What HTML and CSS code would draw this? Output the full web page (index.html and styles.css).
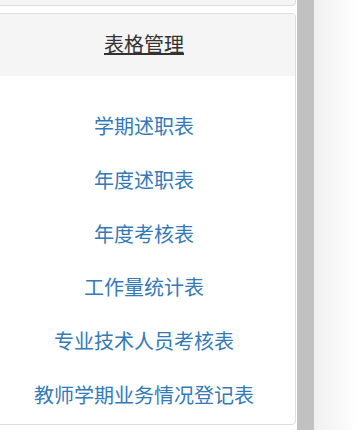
FILE: index.html
```html
<!DOCTYPE html>
<html lang="zh-CN">
<head>
  <meta charset="UTF-8">
  <title>表格管理</title>
  <link rel="stylesheet" href="styles.css">
</head>
<body>

  <div class="page">
    <div class="sidebar">
      <!-- end of the panel above -->
      <div class="panel panel-prev"></div>

      <div class="panel">
        <div class="panel-heading">
          <a href="#" class="panel-title">表格管理</a>
        </div>
        <ul class="form-list">
          <li><a href="#">学期述职表</a></li>
          <li><a href="#">年度述职表</a></li>
          <li><a href="#">年度考核表</a></li>
          <li><a href="#">工作量统计表</a></li>
          <li><a href="#">专业技术人员考核表</a></li>
          <li><a href="#">教师学期业务情况登记表</a></li>
        </ul>
      </div>
    </div>

    <div class="scroll-bar"></div>
    <div class="content"></div>
  </div>

</body>
</html>
```

FILE: styles.css
```css
html, body {
  margin: 0;
  padding: 0;
  height: 100%;
  background: #fff;
  font-family: "Liberation Sans", "Noto Sans CJK SC", sans-serif;
}

.page {
  display: flex;
  height: 430px;
  overflow: hidden;
}

.sidebar {
  width: 297px;
  flex-shrink: 0;
  overflow: hidden;
}

.panel {
  margin-left: -8px;
  width: 302px;
  border: 1px solid #ddd;
  border-radius: 4px;
  background: #fff;
  box-sizing: content-box;
}

.panel-prev {
  height: 5px;
  margin-bottom: 7px;
  border-top: none;
  border-radius: 0 0 4px 4px;
  background: #f5f5f5;
}

.panel-heading {
  background: #f5f5f5;
  padding: 17px 0 16px;
  text-align: center;
  font-size: 20px;
  line-height: 29px;
  border-radius: 4px 4px 0 0;
}

.panel-title {
  color: #333;
  text-decoration: underline;
}

.form-list {
  list-style: none;
  margin: 0;
  padding: 25px 0 0;
}

.form-list li {
  text-align: center;
  padding: 13px 0;
  font-size: 20px;
  line-height: 27.8px;
}

.form-list a {
  color: #337ab7;
  text-decoration: none;
}

.scroll-bar {
  width: 17px;
  flex-shrink: 0;
  background: #c1c1c1;
}

.content {
  flex: 1;
  background: linear-gradient(to right, #f0f0f0, #fff);
}
```
